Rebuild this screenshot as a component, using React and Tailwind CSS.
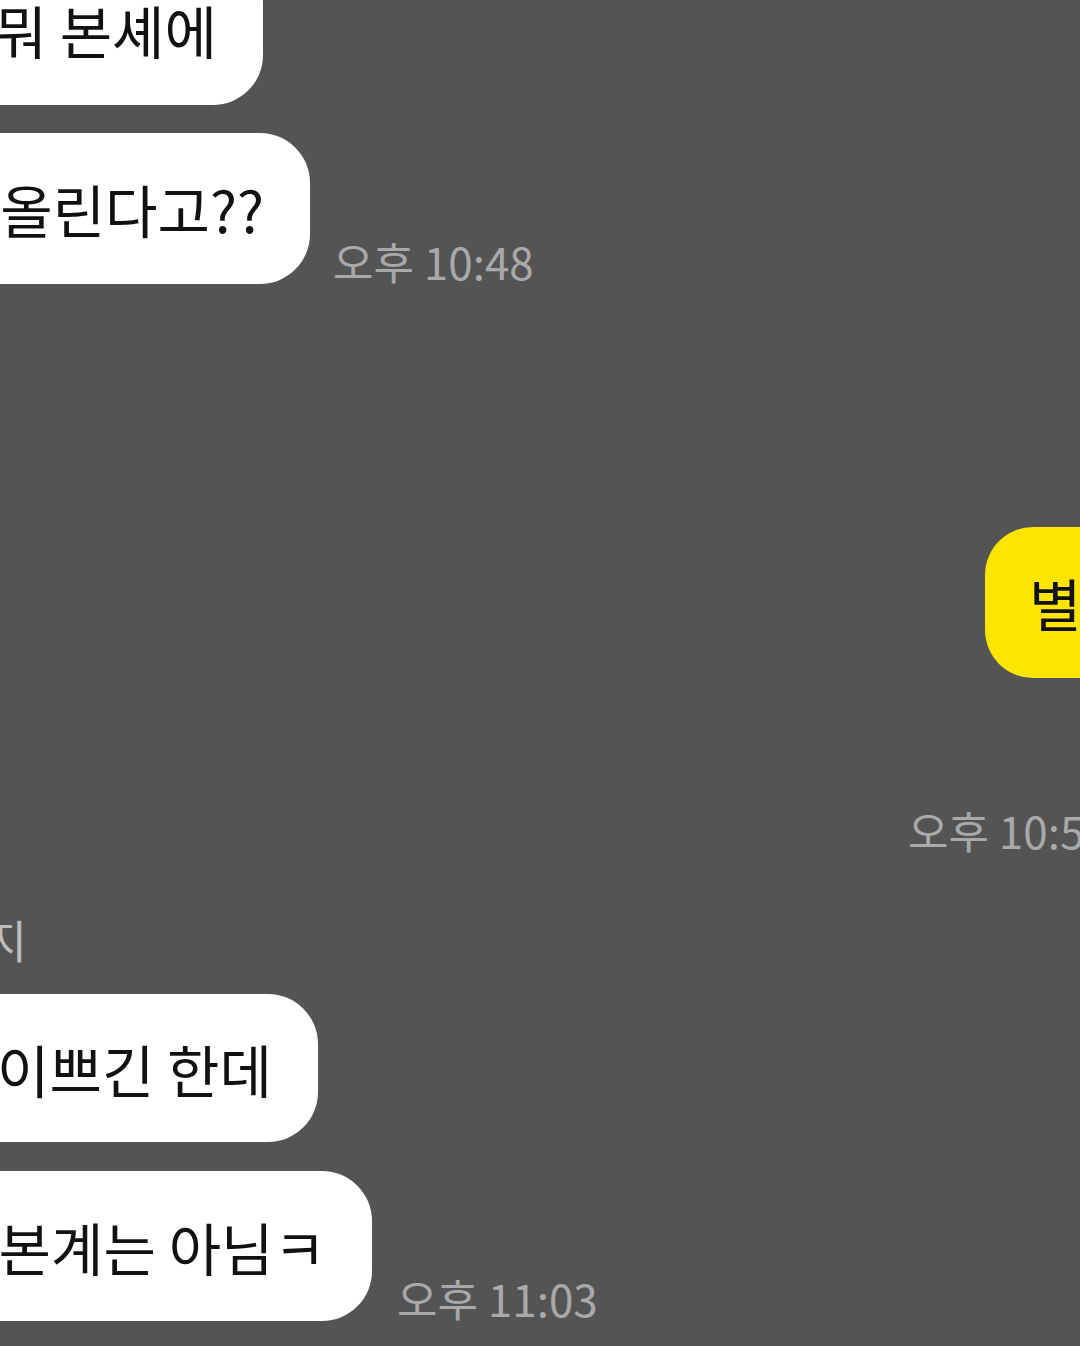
export default function App() {
    return (
        <div
            className="w-[1080px] h-[1346px] bg-[#545454] overflow-hidden flex flex-col"
            style={{ fontFamily: '"Noto Sans CJK KR", "Noto Sans", sans-serif' }}
        >
            {/* incoming 1 */}
            <div className="mt-[-46px] flex items-end">
                <LeftBubble width="w-[263px]" height="h-[151px]" text="이거 뭐 본셰에" />
            </div>

            {/* incoming 2 + time */}
            <div className="mt-[28px] flex items-end">
                <LeftBubble width="w-[310px]" height="h-[151px]" text="또 올린다고??" />
                <Time className="ml-[23px] mb-[2px]">오후 10:48</Time>
            </div>

            {/* outgoing (yellow) */}
            <div className="mt-[243px] flex">
                <div className="ml-[985px] shrink-0 h-[151px] flex items-center bg-[#fee500] rounded-[48px] pl-[44px] pr-[46px] text-[57px] leading-none text-[#111111] whitespace-nowrap">
                    별로 안 이쁜데
                </div>
            </div>

            <div className="mt-[131px] flex">
                <Time className="ml-[908px]">오후 10:57</Time>
            </div>

            {/* sender name */}
            <div className="mt-[66px] flex">
                <div className="w-[27px] flex justify-end">
                    <span className="shrink-0 whitespace-nowrap text-[45px] leading-none text-[#bdbdbd]">현지</span>
                </div>
            </div>

            {/* incoming 3 */}
            <div className="mt-[32px] flex items-end">
                <LeftBubble width="w-[318px]" height="h-[148px]" text="사진 이쁘긴 한데" />
            </div>

            {/* incoming 4 + time */}
            <div className="mt-[29px] flex items-end">
                <LeftBubble width="w-[372px]" height="h-[150px]" text="근데 본계는 아님ㅋ" />
                <Time className="ml-[25px] mb-[2px]">오후 11:03</Time>
            </div>
        </div>
    );
}

function LeftBubble({ width, height, text }) {
    return (
        <div className={`${width} shrink-0 flex justify-end`}>
            <div className={`${height} shrink-0 flex items-center bg-white rounded-[50px] pl-[44px] pr-[46px] text-[57px] leading-none text-[#111111] whitespace-nowrap`}>
                {text}
            </div>
        </div>
    );
}

function Time({ className, children }) {
    return (
        <span className={`shrink-0 whitespace-nowrap text-[44px] leading-[42px] text-[#a9a9a9] ${className}`}>
            {children}
        </span>
    );
}
